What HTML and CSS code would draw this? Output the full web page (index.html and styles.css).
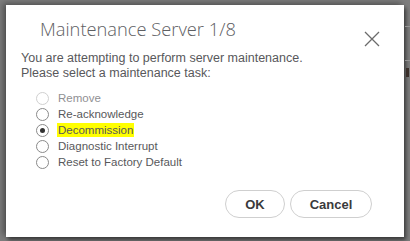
FILE: index.html
```html
<!doctype html>
<html lang="en">
  <head>
    <meta charset="UTF-8" />
    <title>Maintenance Server</title>
    <link rel="stylesheet" href="styles.css">
  </head>
  <body>
    <div class="backdrop">
      <div class="dialog">
        <div class="dialog-head">
          <h2>Maintenance Server 1/8</h2>
          <button class="close" aria-label="Close">
            <svg width="16" height="16" viewBox="0 0 16 16">
              <path d="M1 1L15 15M15 1L1 15" stroke="#6b6b6b" stroke-width="1.3" fill="none" />
            </svg>
          </button>
        </div>
        <p class="intro">You are attempting to perform server maintenance.<br>Please select a maintenance task:</p>
        <ul class="tasks">
          <li class="disabled"><span class="radio"></span>Remove</li>
          <li><span class="radio"></span>Re-acknowledge</li>
          <li><span class="radio checked"></span><mark>Decommission</mark></li>
          <li><span class="radio"></span>Diagnostic Interrupt</li>
          <li><span class="radio"></span>Reset to Factory Default</li>
        </ul>
        <div class="actions">
          <button class="pill">OK</button>
          <button class="pill">Cancel</button>
        </div>
      </div>
      <div class="behind">
        <span class="rule"></span>
        <span class="rule second"></span>
        <span class="frag"></span>
      </div>
    </div>
  </body>
</html>
```

FILE: styles.css
```css
body {
  margin: 0;
  font-family: "Liberation Sans", Arial, sans-serif;
  background: #7d7d7d;
}
.backdrop {
  display: flex;
  height: 241px;
  padding: 5px 0 0 6px;
  box-sizing: border-box;
}
.dialog {
  width: 398px;
  height: 232px;
  background: #fff;
  box-shadow: -3px -2px 6px rgba(0, 0, 0, 0.35), 2px 3px 4px rgba(0, 0, 0, 0.5);
  padding: 0 0 0 15px;
  box-sizing: border-box;
  display: flex;
  flex-direction: column;
  color: #58585b;
}
.dialog-head {
  display: flex;
  justify-content: space-between;
  align-items: flex-start;
  height: 42px;
}
h2 {
  margin: 12px 0 0 19px;
  font-family: "Open Sans", sans-serif;
  font-weight: 300;
  font-size: 18.3px;
  line-height: 24px;
  color: #5e6063;
}
.close {
  display: flex;
  height: 16px;
  margin: 26px 24px 0 0;
  padding: 0;
  border: none;
  background: none;
}
.intro {
  margin: 4px 0 0;
  font-size: 12.5px;
  line-height: 15px;
}
.tasks {
  list-style: none;
  margin: 9px 0 0 15px;
  padding: 0;
  font-size: 11.5px;
}
.tasks li {
  display: flex;
  align-items: center;
  height: 16px;
}
.tasks .disabled {
  color: #909093;
}
.radio {
  width: 11px;
  height: 11px;
  border: 1px solid #8a8a8a;
  border-radius: 50%;
  margin-right: 9px;
  display: flex;
  align-items: center;
  justify-content: center;
}
.disabled .radio {
  border-color: #d0d0d0;
}
.radio.checked::after {
  content: "";
  width: 5px;
  height: 5px;
  border-radius: 50%;
  background: #333;
}
mark {
  background: #ffff00;
  color: #58585b;
  padding: 1px 1px;
  margin-left: -1px;
}
.actions {
  display: flex;
  justify-content: flex-end;
  gap: 5px;
  margin: auto 32px 19px 0;
}
.pill {
  height: 28px;
  border: 1px solid #cfcfcf;
  border-radius: 14px;
  background: #fff;
  font-family: "Liberation Sans", Arial, sans-serif;
  font-weight: bold;
  font-size: 13px;
  color: #3a3a3c;
}
.pill:first-child {
  width: 60px;
}
.pill:last-child {
  width: 82px;
}
.behind {
  flex: 1;
  position: relative;
}
.rule {
  position: absolute;
  left: 1px;
  right: 0;
  top: 21px;
  height: 1px;
  background: #959595;
}
.rule.second {
  top: 55px;
}
.frag {
  position: absolute;
  left: 2px;
  top: 63px;
  width: 3px;
  height: 9px;
  background: #3a2f2a;
}
```
